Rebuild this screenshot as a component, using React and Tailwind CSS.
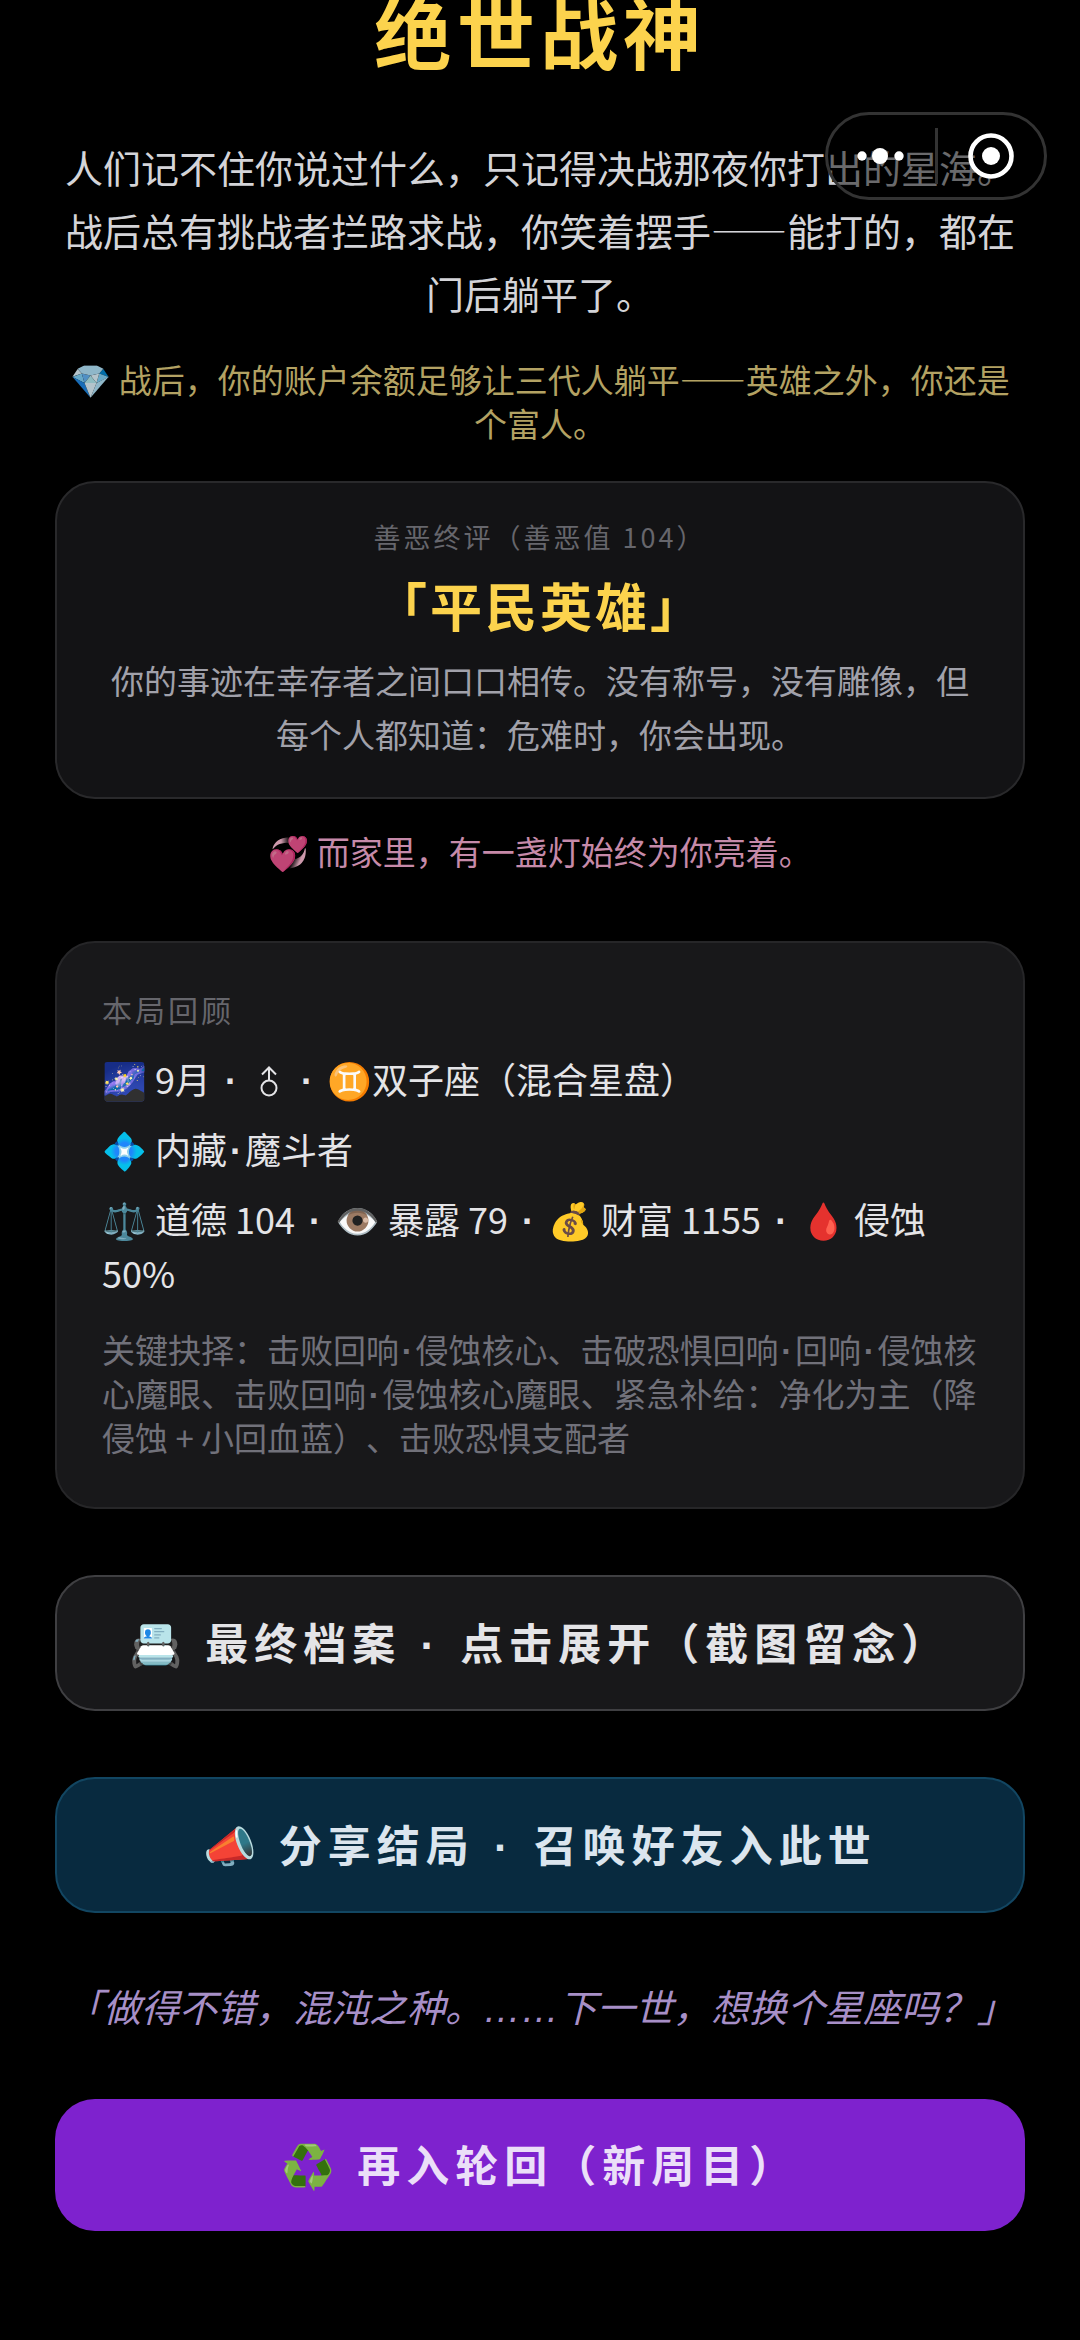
import React, { Fragment, useState } from 'react';

const record = {
  title: '绝世战神',
  story:
    '人们记不住你说过什么，只记得决战那夜你打出的星海。战后总有挑战者拦路求战，你笑着摆手——能打的，都在门后躺平了。',
  wealth: '战后，你的账户余额足够让三代人躺平——英雄之外，你还是个富人。',
  karma: 104,
  alignment: '「平民英雄」',
  alignmentText: '你的事迹在幸存者之间口口相传。没有称号，没有雕像，但每个人都知道：危难时，你会出现。',
  family: '而家里，有一盏灯始终为你亮着。',
  talent: '内藏·魔斗者',
  choices: [
    '击败回响·侵蚀核心',
    '击破恐惧回响·回响·侵蚀核心魔眼',
    '击败回响·侵蚀核心魔眼',
    '紧急补给：净化为主（降侵蚀 + 小回血蓝）',
    '击败恐惧支配者',
  ],
};

const Emoji = ({ children }) => (
  <span className="font-['Noto_Color_Emoji'] leading-none font-normal not-italic">{children}</span>
);

const Dot = () => (
  <span className="inline-block w-[0.5em] text-center font-['Liberation_Sans',sans-serif] leading-none font-bold">·</span>
);

// Dot between two facts, with a space on each side
const Separator = () => (
  <span className="mx-[3px]"> <Dot /> </span>
);

// Names like 回响·侵蚀核心 take the half-width dot
const Dotted = ({ text }) =>
  text.split('·').map((part, i) => (
    <Fragment key={i}>
      {i > 0 && <Dot />}
      {part}
    </Fragment>
  ));

const MaleSign = () => (
  <svg viewBox="0 0 36 36" className="inline-block h-9 w-9 align-[-6px]" fill="none" stroke="currentColor" strokeWidth="2" role="img" aria-label="男">
    <circle cx="18" cy="24" r="7.5" />
    <path d="M18 16.5V4M11 10.5L18 3.5L25 10.5" />
  </svg>
);

// Floating mini program menu, stays over the page while it scrolls
const Capsule = () => (
  <div className="fixed right-[33px] top-28 z-10 flex h-22 w-[222px] items-center rounded-full border-3 border-[#333333] bg-black/50">
    <button type="button" aria-label="更多" className="flex h-full flex-1 items-center justify-center">
      <svg viewBox="0 0 48 18" className="h-[18px] w-12" fill="#ffffff">
        <circle cx="5" cy="9" r="4.7" />
        <circle cx="23" cy="9" r="8" />
        <circle cx="42" cy="9" r="4.7" />
      </svg>
    </button>
    <div className="h-14 w-[3px] bg-[#333333]" />
    <button type="button" aria-label="关闭" className="flex h-full flex-1 items-center justify-center">
      <svg viewBox="0 0 46 46" className="h-[46px] w-[46px]">
        <circle cx="23" cy="23" r="20.5" fill="none" stroke="#ffffff" strokeWidth="4.6" />
        <circle cx="23" cy="23" r="9" fill="#ffffff" />
      </svg>
    </button>
  </div>
);

const ActionButton = ({ icon, className, onClick, children }) => (
  <button
    type="button"
    onClick={onClick}
    className={`block w-full rounded-[40px] pt-[34px] pb-[38px] text-[43px] leading-[60px] font-bold tracking-[6px] ${className}`}
  >
    <Emoji>{icon}</Emoji> {children}
  </button>
);

const App = () => {
  const [, setOpen] = useState(false);

  return (
    <div className="min-h-screen bg-black px-[55px] pb-27 font-['Noto_Sans_CJK_SC',sans-serif] [text-spacing-trim:space-all]" lang="zh-CN">
      <Capsule />

      {/* Ending */}
      <header className="text-center">
        <h1 className="text-[78px] leading-[60px] font-bold tracking-[5px] text-[#fcd34d]">{record.title}</h1>
        <p className="mt-[75px] text-[38px] leading-[63px] text-[#d4d4d8]">{record.story}</p>
        <p className="mt-[33px] text-[33px] leading-[44px] text-[#b3a263]">
          <span className="leading-none opacity-80"><Emoji>💎</Emoji></span> {record.wealth}
        </p>
      </header>

      {/* Alignment */}
      <section className="mt-9 rounded-[40px] border-2 border-[#29292b] bg-[#131315] px-11 pt-[34px] pb-9 text-center">
        <div className="text-[27px] leading-[40px] tracking-[3px] text-[#66666c]">善恶终评（善恶值 {record.karma}）</div>
        <h2 className="mt-3 text-[52px] leading-[72px] font-bold tracking-[3px] text-[#fcd34d]">{record.alignment}</h2>
        <p className="mt-3 text-[33px] leading-[54px] text-[#a1a1aa]">{record.alignmentText}</p>
      </section>

      <p className="mt-[30px] text-center text-[33px] leading-[44px] text-[#c68aa9]">
        <span className="leading-none opacity-80"><Emoji>💞</Emoji></span> {record.family}
      </p>

      {/* Review */}
      <section className="mt-[68px] rounded-[40px] border-2 border-[#262628] bg-[#18181a] px-[45px] pt-11 pb-12">
        <h3 className="text-[30px] leading-[44px] tracking-[3px] text-[#66666c]">本局回顾</h3>
        <ul className="mt-5 space-y-4 text-[36px] leading-[54px] text-[#e4e4e7]">
          <li><Emoji>🌌</Emoji> 9月<Separator /><MaleSign /><Separator /><Emoji>♊</Emoji>双子座（混合星盘）</li>
          <li><Emoji>💠</Emoji> <Dotted text={record.talent} /></li>
          <li>
            <Emoji>⚖️</Emoji> 道德 {record.karma}<Separator />
            <Emoji>👁️</Emoji> 暴露 79<Separator />
            <Emoji>💰</Emoji> 财富 1155<Separator />
            <Emoji>🩸</Emoji> 侵蚀 50%
          </li>
        </ul>
        <p className="mt-7 text-[33px] leading-[44px] text-[#71717a]">
          关键抉择：<Dotted text={record.choices.join('、')} />
        </p>
      </section>

      {/* Actions */}
      <div className="mt-[66px] space-y-[66px]">
        <ActionButton icon="📇" className="border-2 border-[#3f3f42] bg-[#18181a] text-[#e4e4e7]" onClick={() => setOpen(true)}>
          最终档案<Separator />点击展开（截图留念）
        </ActionButton>
        <ActionButton icon="📣" className="border-2 border-[#124662] bg-[#082a3f] text-[#dbe5ee]">
          分享结局<Separator />召唤好友入此世
        </ActionButton>
        <p className="text-center text-[38px] leading-[54px] italic text-[#a78fc7]">
          「做得不错，混沌之种。<span className="font-['Liberation_Sans',sans-serif] leading-none">……</span>下一世，想换个星座吗？」
        </p>
        <ActionButton icon="♻️" className="bg-[#7e22ce] text-[#ebdff8]">
          再入轮回（新周目）
        </ActionButton>
      </div>
    </div>
  );
};

export default App;
